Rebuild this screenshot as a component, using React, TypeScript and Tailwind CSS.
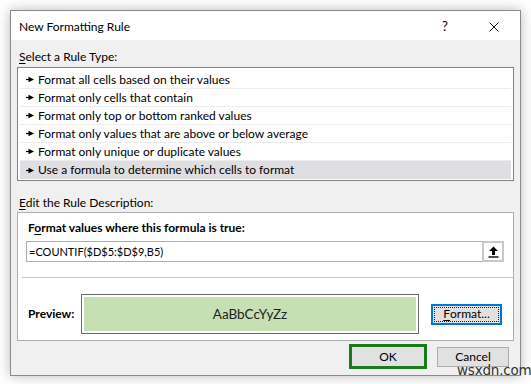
import React from 'react';

const ruleTypes = [
  'Format all cells based on their values',
  'Format only cells that contain',
  'Format only top or bottom ranked values',
  'Format only values that are above or below average',
  'Format only unique or duplicate values',
  'Use a formula to determine which cells to format',
];

// Small "pointer" glyph used in front of every rule type
const Pointer = () => (
  <svg width="8" height="7" viewBox="0 0 8 7" className="shrink-0">
    <path d="M0 3.5h4" stroke="#000" strokeWidth="1.2" />
    <path d="M2.5 0.8L8 3.5L2.5 6.2z" fill="#000" />
  </svg>
);

const App: React.FC = () => {
  const selected = 5;

  return (
    <div
      className="relative w-[531px] h-[384px] bg-white pl-[10px] pt-[10px] overflow-hidden text-[12px] text-black"
      style={{ fontFamily: 'Lato, "Noto Sans", sans-serif' }}
    >
      {/* Dialog */}
      <div className="w-[511px] h-[366px] border border-[#8a8a8a] bg-[#f0f0f0] flex flex-col shadow-[0_0_12px_rgba(0,0,0,0.28)]">
        {/* Title bar */}
        <div className="h-[29px] bg-white flex items-center pl-[8px] pt-[2px] shrink-0">
          <span className="text-[12px] leading-none">New Formatting Rule</span>
          <span className="ml-auto w-[20px] text-center text-[13px] leading-none">?</span>
          <div className="ml-[34px] mr-[21px] w-[10px] h-[10px]">
            <svg width="10" height="10" viewBox="0 0 10 10">
              <path d="M0.5 0.5L9.5 9.5M9.5 0.5L0.5 9.5" stroke="#111" strokeWidth="1" />
            </svg>
          </div>
        </div>

        {/* Body */}
        <div className="flex-1 flex flex-col px-[6px]">
          <div className="mt-[9px] h-[16px] leading-[16px] pl-[2px]">
            <span className="underline underline-offset-2">S</span>elect a Rule Type:
          </div>

          {/* Rule list */}
          <div className="mt-[2px] h-[114px] border border-[#828282] bg-white pt-[3px] px-[2px]">
            {ruleTypes.map((rule, i) => (
              <div
                key={rule}
                className={`h-[18px] flex items-center gap-[4px] pl-[6px] ${
                  i === selected ? 'bg-[#dedee3]' : 'border-b border-[#ececec]'
                }`}
              >
                <Pointer />
                <span className="leading-none">{rule}</span>
              </div>
            ))}
          </div>

          <div className="mt-[14px] h-[16px] leading-[16px] pl-[2px]">
            <span className="underline underline-offset-2">E</span>dit the Rule Description:
          </div>

          {/* Rule description panel */}
          <div className="mt-[1px] h-[129px] border border-[#adadad] bg-white flex flex-col">
            <div className="mt-[7px] ml-[10px] h-[16px] leading-[16px] font-bold">
              F<span className="underline underline-offset-2">o</span>rmat values where this formula is true:
            </div>
            <div className="mt-[5px] ml-[8px] mr-[9px] h-[21px] flex border border-[#adadad]">
              <div className="flex-1 flex items-center pl-[2px] leading-none text-[11px]">=COUNTIF($D$5:$D$9,B5)</div>
              <div className="w-[22px] -my-[1px] -mr-[1px] border-2 border-[#c8c8c8] bg-white flex items-center justify-center">
                <svg width="11" height="12" viewBox="0 0 11 12">
                  <path d="M5.5 0.5L10 5H7v4H4V5H1z" fill="#000" />
                  <path d="M0.5 11h10" stroke="#000" strokeWidth="1.4" />
                </svg>
              </div>
            </div>
            <div className="mt-[15px] ml-[4px] h-px bg-[#c8c8c8]" />

            <div className="flex items-center mt-[16px] pl-[10px]">
              <span className="w-[53px] font-bold">Preview:</span>
              <div className="w-[338px] h-[40px] border border-[#696969] p-[2px] bg-white">
                <div className="h-full bg-[#c6e0b4] flex items-center justify-center text-[13.5px] text-[#222]">
                  AaBbCcYyZz
                </div>
              </div>
              <div className="ml-[12px] w-[71px] h-[21px] border-2 border-[#0078d7] bg-[#e1e1e1] p-px">
                <div className="h-full border border-dotted border-[#222] flex items-center justify-center leading-none">
                  <span className="underline underline-offset-2">F</span>ormat...
                </div>
              </div>
            </div>
          </div>

          {/* Buttons */}
          <div className="mt-[3px] flex justify-end items-center pr-[5px]">
            <div className="w-[78px] h-[25px] border-[3px] border-[#1c7a1c] bg-[#e1e1e1] flex items-center justify-center">
              OK
            </div>
            <div className="ml-[10px] w-[72px] h-[20px] border border-[#adadad] bg-[#e1e1e1] flex items-center justify-center">
              Cancel
            </div>
          </div>
        </div>
      </div>

      {/* Watermark */}
      <div
        className="absolute left-[457px] top-[362px] text-[13.5px] leading-[16px] text-[#333] tracking-[-0.2px]"
        style={{ fontFamily: '"DejaVu Sans", sans-serif' }}
      >
        wsxdn.com
      </div>
    </div>
  );
};

export default App;
